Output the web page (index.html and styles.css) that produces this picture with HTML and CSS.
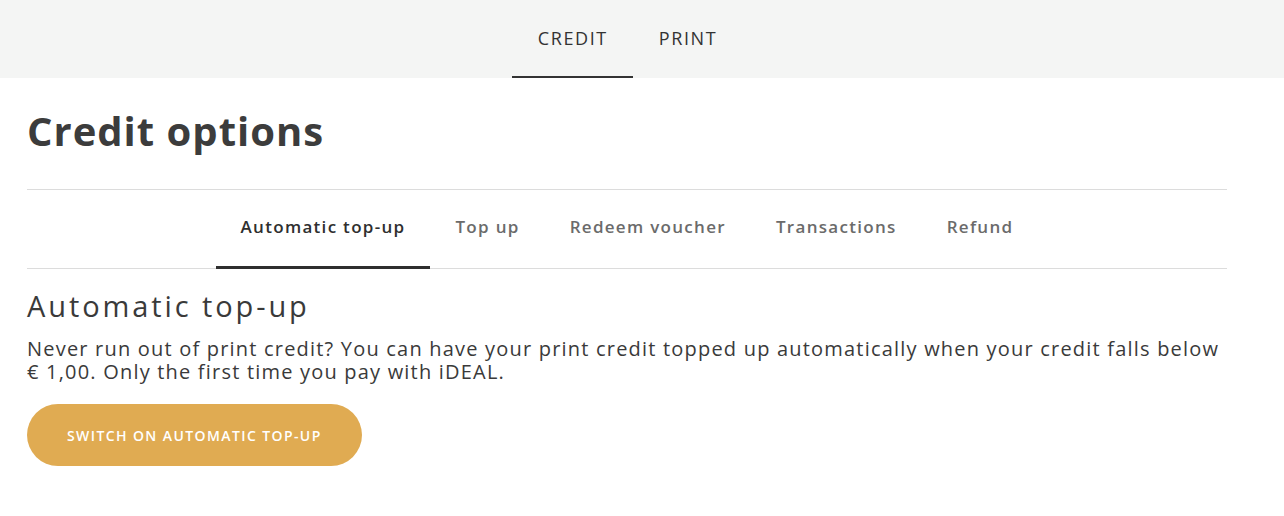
FILE: index.html
```html
<!DOCTYPE html>
<html>
<head>
    <title>Credit options</title>
    <link rel="stylesheet" href="styles.css">
</head>
<body>
    <nav class="top-nav">
        <div class="top-nav-inner">
            <a class="top-link active" href="#">CREDIT</a>
            <a class="top-link" href="#">PRINT</a>
        </div>
    </nav>

    <main class="page">
        <h1>Credit options</h1>

        <div class="tabs">
            <a class="tab active" href="#">Automatic top-up</a>
            <a class="tab" href="#">Top up</a>
            <a class="tab" href="#">Redeem voucher</a>
            <a class="tab" href="#">Transactions</a>
            <a class="tab" href="#">Refund</a>
        </div>

        <section class="panel">
            <h2>Automatic top-up</h2>
            <p>Never run out of print credit? You can have your print credit topped up automatically when your credit falls below € 1,00. Only the first time you pay with iDEAL.</p>
            <button class="pill-button">Switch on automatic top-up</button>
        </section>
    </main>
</body>
</html>
```

FILE: styles.css
```css
body {
    margin: 0;
    font-family: "Open Sans", Arial, sans-serif;
    color: #3a3a3a;
    background: #fff;
}
a {
    text-decoration: none;
    color: inherit;
}
.top-nav {
    background-color: #f4f5f4;
    height: 78px;
}
.top-nav-inner {
    width: 1200px;
    height: 100%;
    margin-left: 27px;
    display: flex;
    justify-content: center;
}
.top-link {
    display: flex;
    align-items: center;
    padding: 0 25px 0 26px;
    font-size: 18px;
    letter-spacing: 1.6px;
    color: #333;
    border-bottom: 2px solid transparent;
    box-sizing: border-box;
}
.top-link.active {
    border-bottom-color: #333;
}
.page {
    width: 1200px;
    padding-left: 27px;
}
h1 {
    margin: 0 0 35px;
    padding-top: 30px;
    font-size: 40px;
    line-height: 46px;
    font-weight: 700;
    letter-spacing: 1px;
    color: #3c3c3c;
}
.tabs {
    border-top: 1px solid #dcdcdc;
    border-bottom: 1px solid #dcdcdc;
    display: flex;
    justify-content: center;
    height: 78px;
}
.tab {
    display: flex;
    align-items: center;
    padding: 0 25px 4px 25px;
    font-size: 17px;
    font-weight: 600;
    letter-spacing: 1.3px;
    color: #6b6b6b;
    border-bottom: 3px solid transparent;
    margin-bottom: -1px;
}
.tab.active {
    color: #2f2f2f;
    border-bottom-color: #2f2f2f;
}
h2 {
    margin: 19px 0 0;
    font-size: 29px;
    line-height: 36px;
    font-weight: 400;
    letter-spacing: 2.9px;
}
p {
    margin: 13px 0 0;
    font-size: 20px;
    line-height: 23px;
    letter-spacing: 1.2px;
}
.pill-button {
    margin-top: 21px;
    height: 62px;
    padding: 0 40px;
    border: none;
    border-radius: 31px;
    background-color: #e0ab52;
    color: #fff;
    font-family: inherit;
    font-size: 14px;
    font-weight: 600;
    letter-spacing: 1.4px;
    text-transform: uppercase;
    cursor: pointer;
}
```
